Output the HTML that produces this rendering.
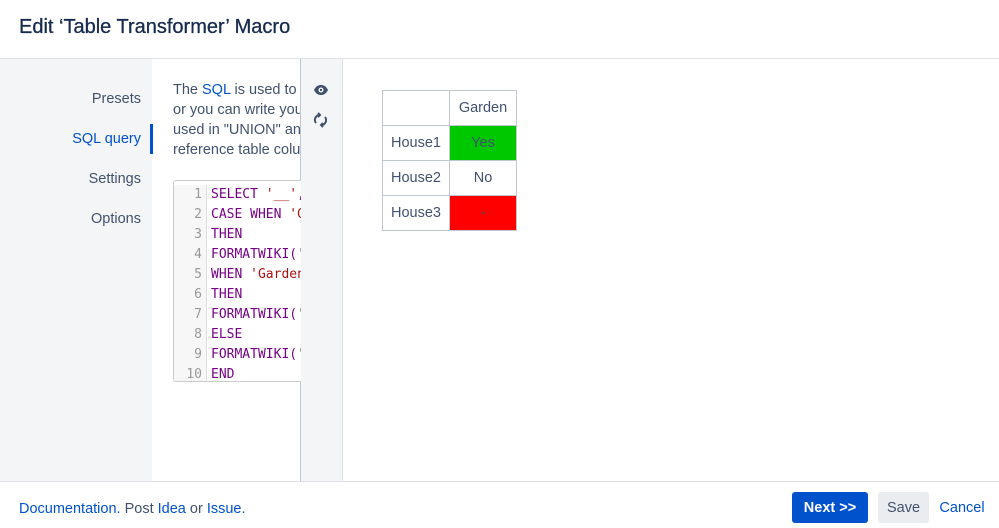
<!DOCTYPE html>
<html><head><style>
body{margin:0;width:999px;height:528px;overflow:hidden;font-family:"Liberation Sans",sans-serif;background:#fff;position:relative;color:#172b4d}
.a{position:absolute}
.h{left:19px;top:16px;font-size:20px;color:#172b4d;font-weight:500;-webkit-text-stroke:0.3px #172b4d}
.nav{font-size:14.5px;color:#42526e;right:858px;text-align:right}
.txt{font-size:14.5px;color:#42526e;line-height:20px;left:173px;top:80px;width:127px;overflow:hidden;white-space:nowrap}
.code{left:173px;top:180px;width:127px;height:200px;border:1px solid #ccc;border-right:none;border-radius:3px 0 0 3px;overflow:hidden;font-family:"DejaVu Sans Mono","Liberation Mono",monospace;font-size:13px;line-height:20px;background:#fff}
.gut{position:absolute;left:0;top:4px;width:32px;background:#f7f7f7;border-right:1px solid #ddd;height:200px;text-align:right;color:#999}
.gut div{padding-right:4px}
.ln{position:absolute;left:37px;top:4px;white-space:pre;color:#708}
.s{color:#a11}
table{border-collapse:collapse;font-size:14.5px;color:#42526e}
td{border:1px solid #c1c7d0;width:66px;height:34px;text-align:center;padding:0;vertical-align:middle}
a{color:#0052cc;text-decoration:none}
.btn{display:flex;align-items:center;justify-content:center;border-radius:3px;font-size:14.5px}
</style></head><body>
<div class="a h">Edit ‘Table Transformer’ Macro</div>
<div class="a" style="left:0;top:58px;width:999px;height:1px;background:#dfe1e6"></div>
<div class="a" style="left:0;top:59px;width:152px;height:422px;background:#f4f5f7"></div>
<div class="a" style="left:300px;top:59px;width:41px;height:422px;background:#f4f5f7;border-left:1px solid #c1c7d0;border-right:1px solid #dfe1e6"></div>
<div class="a nav" style="top:91px">Presets</div>
<div class="a nav" style="top:131px;color:#0052cc">SQL query</div>
<div class="a" style="left:150px;top:124px;width:3px;height:30px;background:#0052cc"></div>
<div class="a nav" style="top:171px">Settings</div>
<div class="a nav" style="top:211px">Options</div>
<div class="a txt">The <a>SQL</a> is used to <a>tr</a><br>or you can write you<br>used in "UNION" anc<br>reference table colur</div>
<div class="a code"><div class="gut"><div>1</div><div>2</div><div>3</div><div>4</div><div>5</div><div>6</div><div>7</div><div>8</div><div>9</div><div>10</div></div>
<div class="ln">SELECT <span class="s">'__'</span>,
CASE WHEN <span class="s">'G</span>
THEN
FORMATWIKI(<span style="color:#555">'</span>
WHEN <span class="s">'Garden</span>
THEN
FORMATWIKI(<span style="color:#555">'</span>
ELSE
FORMATWIKI(<span style="color:#555">'</span>
END</div></div>
<svg class="a" style="left:313px;top:83px" width="16" height="14" viewBox="0 0 16 14"><path d="M1 7C3 3 5.5 2 8 2s5 1 7 5c-2 4-4.5 5-7 5S3 11 1 7z" fill="#42526e"/><circle cx="8" cy="7" r="2.5" fill="#fff"/><circle cx="8" cy="7" r="1.2" fill="#42526e"/></svg>
<svg class="a" style="left:313px;top:112px" width="15" height="16" viewBox="0 0 15 16" fill="none" stroke="#42526e" stroke-width="2"><path d="M3 11A5 5 0 0 1 6 3"/><path d="M12 5a5 5 0 0 1-3 8"/><path d="M5 1l2 2-2 2M10 15l-2-2 2-2"/></svg>
<table class="a" style="left:382px;top:90px">
<tr><td></td><td>Garden</td></tr>
<tr><td>House1</td><td style="background:#00c800">Yes</td></tr>
<tr><td>House2</td><td>No</td></tr>
<tr><td>House3</td><td style="background:#f00">-</td></tr>
</table>
<div class="a" style="left:0;top:481px;width:999px;height:1px;background:#dfe1e6"></div>
<div class="a" style="left:19px;top:501px;font-size:14.5px;color:#42526e"><a>Documentation.</a> Post <a>Idea</a> or <a>Issue.</a></div>
<div class="a btn" style="left:792px;top:492px;width:76px;height:31px;background:#0052cc;color:#fff;font-weight:bold">Next &gt;&gt;</div>
<div class="a btn" style="left:878px;top:492px;width:51px;height:31px;background:#ebecf0;color:#42526e">Save</div>
<div class="a btn" style="left:936px;top:492px;width:52px;height:31px;color:#0052cc">Cancel</div>
</body></html>
